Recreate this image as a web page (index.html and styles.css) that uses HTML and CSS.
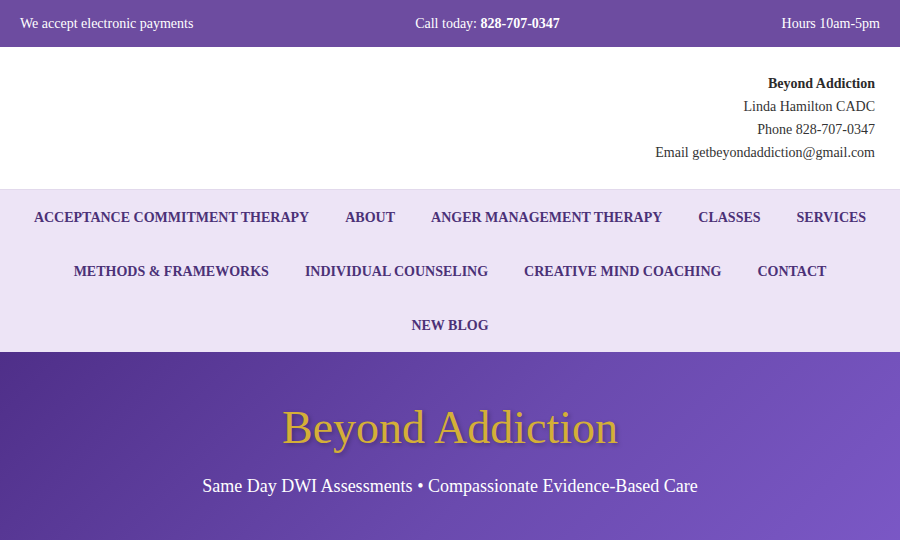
FILE: index.html
```html
<!DOCTYPE html>
<html lang="en">
<head>
<meta charset="utf-8">
<title>Beyond Addiction</title>
<link rel="stylesheet" href="styles.css">
</head>
<body>
<div class="topbar">
  <span>We accept electronic payments</span>
  <span>Call today: <strong>828-707-0347</strong></span>
  <span>Hours 10am-5pm</span>
</div>
<header class="header">
  <div class="contact">
    <strong>Beyond Addiction</strong>
    <span>Linda Hamilton CADC</span>
    <span>Phone 828-707-0347</span>
    <span>Email getbeyondaddiction@gmail.com</span>
  </div>
</header>
<nav class="nav">
  <a href="#">Acceptance Commitment Therapy</a>
  <a href="#">About</a>
  <a href="#">Anger Management Therapy</a>
  <a href="#">Classes</a>
  <a href="#">Services</a>
  <a href="#">Methods &amp; Frameworks</a>
  <a href="#">Individual Counseling</a>
  <a href="#">Creative Mind Coaching</a>
  <a href="#">Contact</a>
  <a href="#">New Blog</a>
</nav>
<section class="hero">
  <h1>Beyond Addiction</h1>
  <p>Same Day DWI Assessments • Compassionate Evidence-Based Care</p>
</section>
</body>
</html>
```

FILE: styles.css
```css
* { box-sizing: border-box; }
html, body { margin: 0; padding: 0; }
body {
  font-family: "Liberation Serif", "Times New Roman", serif;
  color: #333;
  background: #fff;
}
.topbar {
  display: flex;
  justify-content: space-between;
  align-items: center;
  height: 47px;
  padding: 0 20px;
  background: #6d4ca0;
  color: #fff;
  font-size: 14px;
}
.header {
  display: flex;
  justify-content: flex-end;
  padding: 25px 25px;
  background: #fff;
}
.contact {
  display: flex;
  flex-direction: column;
  align-items: flex-end;
  font-size: 14px;
  line-height: 23px;
  color: #333;
}
.contact strong { color: #2b2b2b; }
.nav {
  display: flex;
  flex-wrap: wrap;
  justify-content: center;
  padding: 0 10px;
  background: #ede4f6;
  border-top: 1px solid #e2d9ec;
}
.nav a {
  display: block;
  padding: 19px 18px 17px;
  line-height: 18px;
  font-size: 14px;
  font-weight: bold;
  text-transform: uppercase;
  color: #4b3177;
  text-decoration: none;
}
.hero {
  background: linear-gradient(135deg, #4f2f89 0%, #6a4aae 55%, #7b58c6 100%);
  text-align: center;
  padding: 44px 20px 60px;
  min-height: 200px;
}
.hero h1 {
  margin: 0;
  font-weight: normal;
  font-size: 46px;
  line-height: 64px;
  color: #d4af37;
  text-shadow: 2px 2px 4px rgba(0,0,0,0.25);
}
.hero p {
  margin: 12px 0 0;
  font-size: 18px;
  line-height: 28px;
  color: #fff;
}
```
